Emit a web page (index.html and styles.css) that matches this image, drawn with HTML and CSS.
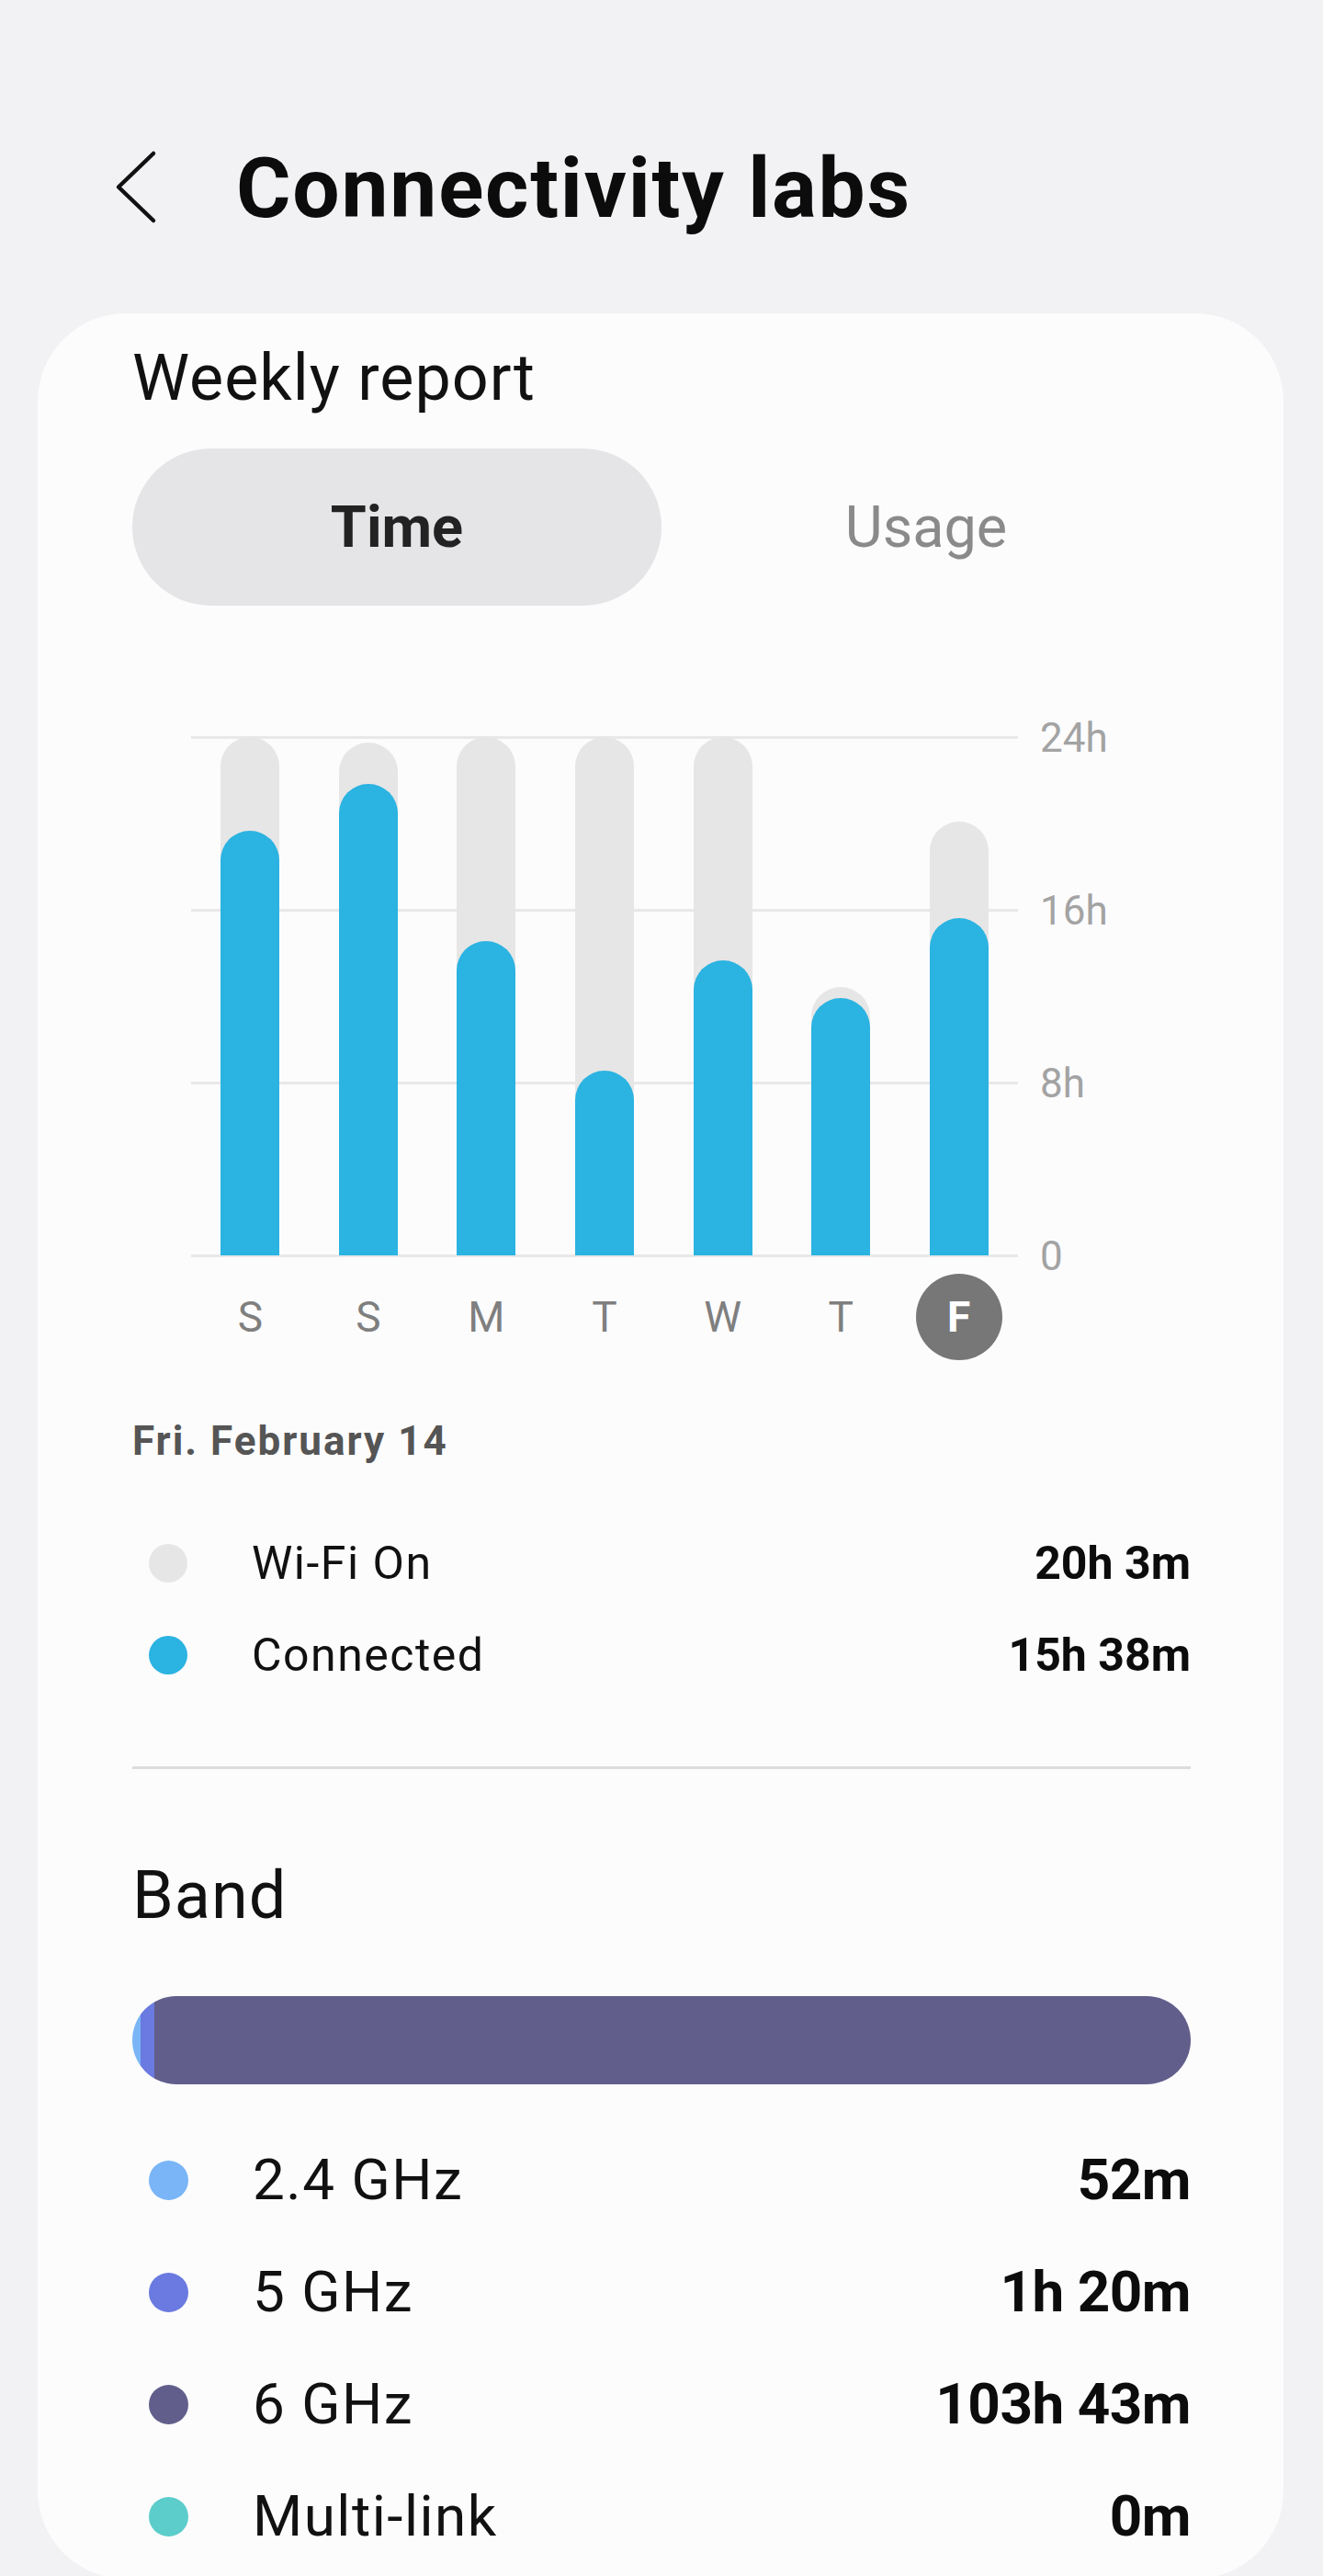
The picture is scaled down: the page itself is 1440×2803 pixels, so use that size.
FILE: index.html
```html
<!DOCTYPE html>
<html lang="en">
<head>
  <meta charset="UTF-8" />
  <meta name="viewport" content="width=device-width, initial-scale=1.0" />
  <title>Connectivity labs</title>
  <link rel="stylesheet" href="styles.css">
</head>
<body>
  <header class="topbar">
    <svg class="back" width="48" height="84" viewBox="0 0 48 84">
      <polyline points="42,5 4,41.5 42,78" fill="none" stroke="#111" stroke-width="4.5" stroke-linecap="round" stroke-linejoin="round" />
    </svg>
    <h1>Connectivity labs</h1>
  </header>

  <main class="card">
    <h2 class="card-title">Weekly report</h2>

    <div class="tabs">
      <button class="tab active">Time</button>
      <button class="tab">Usage</button>
    </div>

    <!-- weekly bars: gray = Wi-Fi on, blue = connected -->
    <div class="chart">
      <div class="plot">
        <div class="day"><div class="track" style="height: 100%"><div class="fill" style="height: 82%"></div></div></div>
        <div class="day"><div class="track" style="height: 98.9%"><div class="fill" style="height: 92%"></div></div></div>
        <div class="day"><div class="track" style="height: 100%"><div class="fill" style="height: 60.7%"></div></div></div>
        <div class="day"><div class="track" style="height: 100%"><div class="fill" style="height: 35.7%"></div></div></div>
        <div class="day"><div class="track" style="height: 100%"><div class="fill" style="height: 57%"></div></div></div>
        <div class="day"><div class="track" style="height: 51.7%"><div class="fill" style="height: 96.1%"></div></div></div>
        <div class="day"><div class="track" style="height: 83.7%"><div class="fill" style="height: 77.7%"></div></div></div>
      </div>
      <div class="axis">
        <span>24h</span>
        <span>16h</span>
        <span>8h</span>
        <span>0</span>
      </div>
    </div>
    <div class="days">
      <span>S</span>
      <span>S</span>
      <span>M</span>
      <span>T</span>
      <span>W</span>
      <span>T</span>
      <span class="today">F</span>
    </div>

    <p class="date">Fri. February 14</p>

    <ul class="legend">
      <li><i class="dot" style="background: #e6e6e6"></i><span class="name">Wi-Fi On</span><b>20h 3m</b></li>
      <li><i class="dot" style="background: #2bb3e1"></i><span class="name">Connected</span><b>15h 38m</b></li>
    </ul>

    <hr class="divider" />

    <h2 class="card-title band-title">Band</h2>

    <div class="band-bar">
      <div style="width: 0.82%; background: #79b5f7"></div>
      <div style="width: 1.26%; background: #6a7ae0"></div>
      <div style="flex: 1; background: #615e8b"></div>
    </div>

    <ul class="legend big">
      <li><i class="dot" style="background: #79b5f7"></i><span class="name">2.4 GHz</span><b>52m</b></li>
      <li><i class="dot" style="background: #6a7ae0"></i><span class="name">5 GHz</span><b>1h 20m</b></li>
      <li><i class="dot" style="background: #615e8b"></i><span class="name">6 GHz</span><b>103h 43m</b></li>
      <li><i class="dot" style="background: #5ccdcb"></i><span class="name">Multi-link</span><b>0m</b></li>
    </ul>
  </main>
</body>
</html>
```

FILE: styles.css
```css
* {
  box-sizing: border-box;
  margin: 0;
  padding: 0;
  font-family: 'Roboto', 'Liberation Sans', sans-serif;
}

body {
  background: #f2f2f4;
  color: #111;
  width: 1440px;
}

/* Header */
.topbar {
  display: flex;
  align-items: center;
  height: 84px;
  margin-top: 162px;
  padding-left: 125px;
}

.topbar h1 {
  margin: 3px 0 0 84px;
  font-size: 91px;
  line-height: 1;
  font-weight: 700;
  letter-spacing: 1.8px;
  color: #0c0c0c;
}

/* Card */
.card {
  margin: 95px 0 0 41px;
  width: 1356px;
  height: 2465px;
  padding: 28px 101px 0 103px;
  background: #fcfcfd;
  border-radius: 96px;
}

.card-title {
  font-size: 70px;
  line-height: 84px;
  font-weight: 400;
  letter-spacing: 1px;
  color: #111;
}

/* Tabs */
.tabs {
  display: grid;
  grid-template-columns: 1fr 1fr;
  height: 171px;
  margin-top: 35px;
}

.tab {
  border: none;
  background: none;
  border-radius: 86px;
  font-size: 63px;
  color: #8a8a8a;
}

.tab.active {
  background: #e5e5e7;
  color: #222;
  font-weight: 700;
}

/* Chart */
.chart {
  display: flex;
  align-items: flex-start;
  height: 567px;
  margin-top: 142px;
  padding-left: 64px;
}

.plot {
  display: flex;
  width: 900px;
  height: 567px;
  padding: 1px 0 2px;
  background: repeating-linear-gradient(to bottom, #e8e8e8 0 3px, transparent 3px 188px);
}

.day {
  flex: 1;
  display: flex;
  justify-content: center;
  align-items: flex-end;
}

.track {
  width: 64px;
  display: flex;
  align-items: flex-end;
  background: #e6e6e6;
  border-radius: 32px 32px 0 0;
}

.fill {
  width: 100%;
  background: #2bb3e1;
  border-radius: 32px 32px 0 0;
}

.axis {
  display: flex;
  flex-direction: column;
  justify-content: space-between;
  height: 604px;
  margin: -18px 0 0 24px;
  font-size: 44px;
  line-height: 40px;
  color: #a3a3a3;
}

.days {
  display: grid;
  grid-template-columns: repeat(7, 1fr);
  width: 900px;
  height: 94px;
  margin: 18px 0 0 64px;
  font-size: 46px;
  color: #7f7f7f;
}

.days span {
  justify-self: center;
  width: 94px;
  line-height: 94px;
  text-align: center;
}

.days .today {
  background: #777;
  color: #fff;
  font-weight: 700;
  border-radius: 50%;
}

/* Selected day */
.date {
  margin-top: 62px;
  font-size: 44px;
  line-height: 52px;
  font-weight: 700;
  letter-spacing: 2px;
  color: #555;
}

.legend {
  list-style: none;
  margin-top: 57px;
}

.legend li {
  display: flex;
  align-items: center;
  height: 100px;
  font-size: 50px;
  line-height: 1;
}

.dot {
  width: 42px;
  height: 42px;
  margin: 0 70px 0 18px;
  border-radius: 50%;
}

.legend .name {
  flex: 1;
  letter-spacing: 1.5px;
  color: #111;
}

.legend b {
  font-weight: 700;
  color: #0c0c0c;
}

.divider {
  margin-top: 71px;
  border: none;
  height: 3px;
  background: #dcdcdc;
}

/* Band */
.band-title {
  margin-top: 95px;
  font-size: 72px;
  line-height: 86px;
}

.band-bar {
  display: flex;
  height: 96px;
  margin-top: 66px;
  border-radius: 48px;
  overflow: hidden;
}

.legend.big {
  margin-top: 43px;
}

.legend.big li {
  height: 122px;
  font-size: 62px;
}

.legend.big b {
  letter-spacing: -0.5px;
}

.legend.big .dot {
  width: 43px;
  height: 43px;
}
```
